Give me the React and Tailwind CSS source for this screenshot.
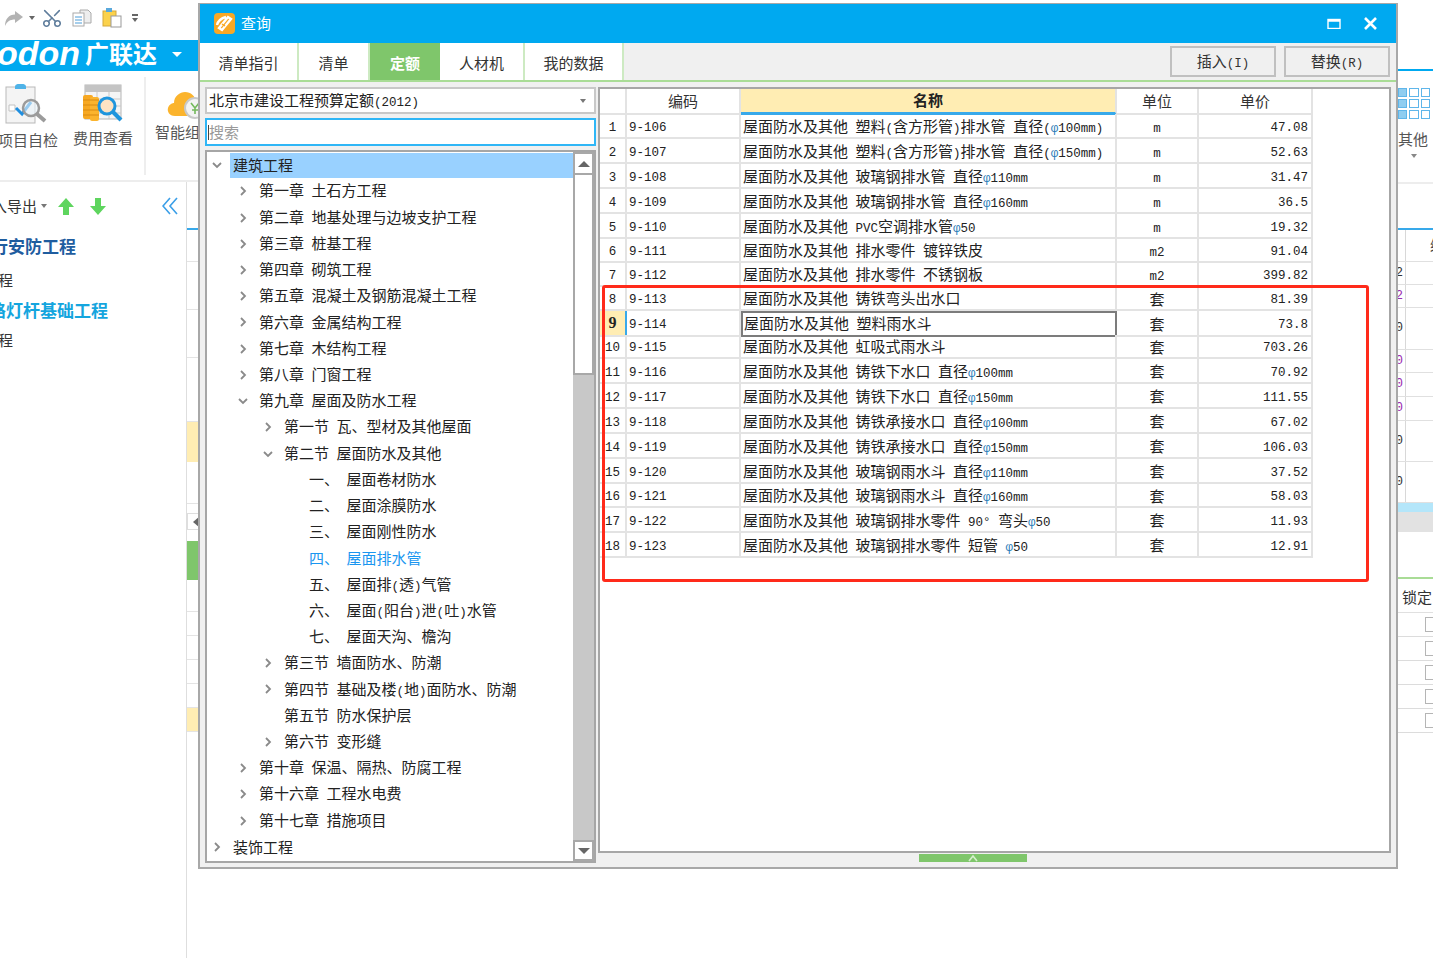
import { Scissors } from "lucide-react";

const treeRows = [
  { level: 0, icon: "down", text: "建筑工程", active: true },
  { level: 1, icon: "right", text: "第一章 土石方工程" },
  { level: 1, icon: "right", text: "第二章 地基处理与边坡支护工程" },
  { level: 1, icon: "right", text: "第三章 桩基工程" },
  { level: 1, icon: "right", text: "第四章 砌筑工程" },
  { level: 1, icon: "right", text: "第五章 混凝土及钢筋混凝土工程" },
  { level: 1, icon: "right", text: "第六章 金属结构工程" },
  { level: 1, icon: "right", text: "第七章 木结构工程" },
  { level: 1, icon: "right", text: "第八章 门窗工程" },
  { level: 1, icon: "down", text: "第九章 屋面及防水工程" },
  { level: 2, icon: "right", text: "第一节 瓦、型材及其他屋面" },
  { level: 2, icon: "down", text: "第二节 屋面防水及其他" },
  { level: 3, text: "一、 屋面卷材防水" },
  { level: 3, text: "二、 屋面涂膜防水" },
  { level: 3, text: "三、 屋面刚性防水" },
  { level: 3, text: "四、 屋面排水管", link: true },
  { level: 3, text: "五、 屋面排(透)气管" },
  { level: 3, text: "六、 屋面(阳台)泄(吐)水管" },
  { level: 3, text: "七、 屋面天沟、檐沟" },
  { level: 2, icon: "right", text: "第三节 墙面防水、防潮" },
  { level: 2, icon: "right", text: "第四节 基础及楼(地)面防水、防潮" },
  { level: 2, text: "第五节 防水保护层" },
  { level: 2, icon: "right", text: "第六节 变形缝" },
  { level: 1, icon: "right", text: "第十章 保温、隔热、防腐工程" },
  { level: 1, icon: "right", text: "第十六章 工程水电费" },
  { level: 1, icon: "right", text: "第十七章 措施项目" },
  { level: 0, icon: "right", text: "装饰工程" },
];

const PRE = "屋面防水及其他 ";
const quotaRows = [
  ["9-106", "塑料(含方形管)排水管 直径(φ100mm)", "m", "47.08"],
  ["9-107", "塑料(含方形管)排水管 直径(φ150mm)", "m", "52.63"],
  ["9-108", "玻璃钢排水管 直径φ110mm", "m", "31.47"],
  ["9-109", "玻璃钢排水管 直径φ160mm", "m", "36.5"],
  ["9-110", "PVC空调排水管φ50", "m", "19.32"],
  ["9-111", "排水零件 镀锌铁皮", "m2", "91.04"],
  ["9-112", "排水零件 不锈钢板", "m2", "399.82"],
  ["9-113", "铸铁弯头出水口", "套", "81.39"],
  ["9-114", "塑料雨水斗", "套", "73.8"],
  ["9-115", "虹吸式雨水斗", "套", "703.26"],
  ["9-116", "铸铁下水口 直径φ100mm", "套", "70.92"],
  ["9-117", "铸铁下水口 直径φ150mm", "套", "111.55"],
  ["9-118", "铸铁承接水口 直径φ100mm", "套", "67.02"],
  ["9-119", "铸铁承接水口 直径φ150mm", "套", "106.03"],
  ["9-120", "玻璃钢雨水斗 直径φ110mm", "套", "37.52"],
  ["9-121", "玻璃钢雨水斗 直径φ160mm", "套", "58.03"],
  ["9-122", "玻璃钢排水零件 90° 弯头φ50", "套", "11.93"],
  ["9-123", "玻璃钢排水零件 短管 φ50", "套", "12.91"],
];

const tabs = [
  { label: "清单指引", width: "w-[99px]" },
  { label: "清单", width: "w-[71px]" },
  { label: "定额", width: "w-[70px]", active: true },
  { label: "人材机", width: "w-[85px]" },
  { label: "我的数据", width: "w-[99px]" },
];

const levelPad = ["pl-[5px]", "pl-[31px]", "pl-[56px]", "pl-[102px]"];
const gridCols = "grid grid-cols-[27px_114px_376px_82px_114px] w-[713px]";

// half-width runs are drawn in mono so they take 7.5px per char next to 15px CJK
function Txt({ children }) {
  const parts = children.split(/(φ|[\x20-\x7e°]+)/).filter(Boolean);
  return (
    <span className="whitespace-pre">
      {parts.map((part, i) =>
        part === "φ" ? (
          <span key={i} className="[font-family:'Liberation_Mono',monospace] text-[12.5px] text-[#2c7db8]">
            {part}
          </span>
        ) : /^[\x20-\x7e°]+$/.test(part) ? (
          <span key={i} className="[font-family:'Liberation_Mono',monospace] text-[12.5px]">
            {part}
          </span>
        ) : (
          <span key={i}>{part}</span>
        )
      )}
    </span>
  );
}

function Chevron({ dir }) {
  return (
    <svg width="10" height="10" viewBox="0 0 10 10" fill="none" stroke="#8a8a8a" strokeWidth="1.8">
      {dir === "down" ? <path d="M1 3l4 4 4-4" /> : <path d="M3 1l4 4-4 4" />}
    </svg>
  );
}

function CheckIcon() {
  return (
    <svg width="46" height="42" viewBox="0 0 46 42" fill="none">
      <rect x="1" y="4" width="29" height="36" fill="#f4f4f4" stroke="#b9b9b9" />
      <path d="M10 4c0-3 3-3 3-3h5s3 0 3 3v2H10z" fill="#4fb3e8" />
      <path d="M4 22h6v6H4z" stroke="#c2c2c2" fill="#fff" />
      <path d="M11 25l6 6 9-12" stroke="#1f8fe0" strokeWidth="3" />
      <circle cx="26" cy="25" r="8" stroke="#9b9b9b" strokeWidth="2.5" fill="#e8f2f8" fillOpacity="0.6" />
      <path d="M32 31l8 7" stroke="#9b9b9b" strokeWidth="4" />
    </svg>
  );
}

function FeeIcon() {
  return (
    <svg width="40" height="38" viewBox="0 0 40 38" fill="none">
      <rect x="2" y="1" width="36" height="34" fill="#f5f5f5" stroke="#b5b5b5" />
      <rect x="2" y="1" width="36" height="7" fill="#c4c4c4" />
      <path d="M2 15h36M2 22h36M2 29h36M14 8v27M26 8v27" stroke="#c9c9c9" />
      <rect x="0" y="11" width="10" height="24" rx="2" fill="#f7a823" />
      <rect x="7" y="13" width="9" height="24" rx="2" fill="#fbb42d" />
      <path d="M0 16h16M0 21h16M0 26h16M0 31h16" stroke="#d98a12" />
      <circle cx="24" cy="22" r="8" fill="#fde3c4" stroke="#1f95dd" strokeWidth="3" />
      <path d="M30 28l8 8" stroke="#1f95dd" strokeWidth="4" />
    </svg>
  );
}

function CloudIcon() {
  return (
    <svg width="34" height="32" viewBox="0 0 34 32" fill="none">
      <path d="M8 29C2 29 0 24 1 21c1-4 5-5 6-5 0-7 6-11 11-11 6 0 10 4 11 9v15z" fill="#fbb42d" />
      <circle cx="28" cy="21" r="10" fill="#f3f3f3" stroke="#c9c9c9" strokeWidth="2" />
      <path d="M24 16l4 5 4-5M28 21v6M25 23h6" stroke="#74b95c" strokeWidth="1.6" />
    </svg>
  );
}

function QuickBar() {
  return (
    <div className="h-[40px] flex items-center pl-[5px] pb-[4px]">
      <svg width="18" height="15" viewBox="0 0 18 15" fill="#b3b3b3">
        <path d="M10 0l8 6-8 6V8.500C5 8.500 2 10.500 0 15 0 8 4 3.500 10 3.500z" />
      </svg>
      <span className="ml-[6px] w-0 h-0 border-x-[3.5px] border-x-transparent border-t-[4px] border-t-[#666]" />
      <Scissors size={22} strokeWidth={1.7} className="ml-[6px] text-[#5f7d9c] -rotate-90" />
      <svg className="ml-[9px]" width="20" height="18" viewBox="0 0 20 18" fill="none">
        <path d="M8 1h8l3 3v10H8z" fill="#eee" stroke="#aaa" />
        <rect x="1" y="4" width="11" height="13" fill="#fff" stroke="#aaa" />
        <path d="M3 8h7M3 11h7M3 14h7" stroke="#4d9dd8" />
      </svg>
      <svg className="ml-[10px]" width="20" height="20" viewBox="0 0 20 20" fill="none">
        <rect x="1" y="3" width="13" height="15" fill="#fbd24c" stroke="#d5a93a" />
        <rect x="4" y="0" width="6" height="4" fill="#5aa9dc" />
        <rect x="9" y="8" width="10" height="11" fill="#fff" stroke="#999" />
      </svg>
      <div className="ml-[10px] flex flex-col items-center gap-[2px]">
        <span className="w-[6px] h-[2px] bg-[#666]" />
        <span className="w-0 h-0 border-x-[3.5px] border-x-transparent border-t-[4px] border-t-[#666]" />
      </div>
    </div>
  );
}

function LeftColumn() {
  return (
    <div className="w-[198px] shrink-0 h-full flex flex-col overflow-hidden">
      <QuickBar />
      {/* logo bar */}
      <div className="h-[31px] bg-[#00a9f0] flex items-center pb-[6px] text-white overflow-hidden">
        <span className="-ml-[3px] [font-family:'Liberation_Sans',sans-serif] font-bold italic text-[34px] leading-none">
          odon
        </span>
        <span className="ml-[5px] font-bold text-[24px] leading-none">广联达</span>
        <span className="ml-[15px] mt-[4px] w-0 h-0 border-x-[5px] border-x-transparent border-t-[5px] border-t-white" />
      </div>
      {/* ribbon */}
      <div className="h-[111px] flex border-b-2 border-[#ededed] text-[#555] text-[15px]">
        <div className="w-[66px] -ml-[5px] flex flex-col items-center pt-[12px] shrink-0">
          <CheckIcon />
          <span className="mt-[4px] leading-[22px] whitespace-nowrap">项目自检</span>
        </div>
        <div className="w-[62px] ml-[11px] flex flex-col items-center pt-[13px] shrink-0">
          <FeeIcon />
          <span className="mt-[5px] leading-[22px] whitespace-nowrap">费用查看</span>
        </div>
        <div className="w-[2px] h-[98px] mt-[6px] ml-[10px] bg-[#eeeeee] shrink-0" />
        <div className="ml-[9px] flex flex-col pt-[16px] shrink-0">
          <div className="pl-[12px]"><CloudIcon /></div>
          <span className="mt-[2px] leading-[22px] whitespace-nowrap">智能组价</span>
        </div>
      </div>
      <div className="flex-1 flex min-h-0">
        {/* project tree */}
        <div className="w-[187px] shrink-0 border-r border-[#dedede] overflow-hidden">
          <div className="h-[48px] flex items-center relative">
            <span className="-ml-[8px] text-[15px] text-[#333] whitespace-nowrap">入导出</span>
            <span className="ml-[4px] w-0 h-0 border-x-[3px] border-x-transparent border-t-[4px] border-t-[#777]" />
            <svg className="ml-[11px]" width="16" height="17" viewBox="0 0 16 17" fill="#5ed55e">
              <path d="M8 0l8 9h-5v8H5V9H0z" />
            </svg>
            <svg className="ml-[16px]" width="16" height="17" viewBox="0 0 16 17" fill="#5ed55e">
              <path d="M8 17L0 8h5V0h6v8h5z" />
            </svg>
            <svg className="ml-[56px]" width="16" height="18" viewBox="0 0 16 18" fill="none" stroke="#3b9fe8" strokeWidth="1.6">
              <path d="M8 1L1 9l7 8M15 1L8 9l7 8" />
            </svg>
          </div>
          <div className="font-bold text-[17px]">
            <div className="h-[32px] -ml-[9px] flex items-center text-[#1f5d9f] whitespace-nowrap">行安防工程</div>
            <div className="h-[36px] -ml-[2px] flex items-center text-[#333] text-[15px] font-normal">程</div>
            <div className="h-[24px] -ml-[11px] flex items-center text-[#14a5de] whitespace-nowrap">路灯杆基础工程</div>
            <div className="h-[36px] -ml-[2px] flex items-center text-[#333] text-[15px] font-normal">程</div>
          </div>
        </div>
        {/* strip of the grid behind the dialog */}
        <div className="flex-1 flex flex-col">
          <div className="h-[46px]" />
          <div className="h-[2px] bg-[#38a9ea]" />
          <div className="h-[32px] border-b border-[#e4e4e4]" />
          <div className="h-[48px] border-b border-[#e4e4e4]" />
          <div className="h-[48px] border-b border-[#e4e4e4]" />
          <div className="h-[64px] border-b border-[#e4e4e4]" />
          <div className="h-[40px] bg-[#ffedb3]" />
          <div className="h-[42px] border-b border-[#e4e4e4]" />
          <div className="h-[9px]" />
          <div className="h-[17px] flex items-center border border-[#dedede]">
            <span className="w-0 h-0 border-y-[5px] border-y-transparent border-r-[6px] border-r-[#666] ml-[5px]" />
          </div>
          <div className="h-[11px]" />
          <div className="h-[39px] bg-[#7fc66b]" />
          <div className="h-[32px] border-b border-[#e4e4e4]" />
          <div className="h-[24px] border-b border-[#e4e4e4]" />
          <div className="h-[24px] border-b border-[#e4e4e4]" />
          <div className="h-[24px] border-b border-[#e4e4e4]" />
          <div className="h-[24px] border-b border-[#e4e4e4]" />
          <div className="h-[24px] bg-[#ffedb3] border-b border-[#e4e4e4]" />
        </div>
      </div>
    </div>
  );
}

const sliverRows = [
  { h: "h-[23px]", v: "2", c: "text-[#333]" },
  { h: "h-[23px]", v: "2", c: "text-[#9a2bb0]" },
  { h: "h-[42px]", v: "0", c: "text-[#333]" },
  { h: "h-[23px]", v: "0", c: "text-[#9a2bb0]" },
  { h: "h-[24px]", v: "0", c: "text-[#9a2bb0]" },
  { h: "h-[24px]", v: "0", c: "text-[#9a2bb0]" },
  { h: "h-[41px]", v: "0", c: "text-[#333]" },
  { h: "h-[41px]", v: "0", c: "text-[#333]" },
];

function RightColumn() {
  return (
    <div className="w-[35px] shrink-0 h-full flex flex-col overflow-hidden">
      <div className="h-[69px] shrink-0" />
      <div className="h-[2px] bg-[#00a9f0] shrink-0" />
      <div className="h-[113px] shrink-0 border-b-2 border-[#ededed] pt-[17px]">
        <div className="grid grid-cols-3 gap-[2px] w-[32px]">
          {[0, 1, 2, 3, 4, 5, 6, 7, 8].map((i) => (
            <span
              key={i}
              className={
                i % 3 === 0
                  ? "h-[9px] bg-[#8fcdf0] border border-[#5fb6ea]"
                  : "h-[9px] bg-white border border-[#5fb6ea]"
              }
            />
          ))}
        </div>
        <div className="mt-[10px] text-[15px] leading-[20px] text-[#555] whitespace-nowrap">其他</div>
        <span className="block mt-[5px] ml-[13px] w-0 h-0 border-x-[3.5px] border-x-transparent border-t-[4px] border-t-[#888]" />
      </div>
      <div className="h-[44px] shrink-0" />
      <div className="h-[2px] bg-[#38a9ea] shrink-0" />
      <div className="h-[32px] shrink-0 flex border-b border-[#e0e0e0]">
        <div className="w-[8px] shrink-0 border-r border-[#d8d8d8]" />
        <div className="pl-[24px] text-[15px] leading-[30px] text-[#444] whitespace-nowrap">编码</div>
      </div>
      {sliverRows.map((row, i) => (
        <div key={i} className={`${row.h} shrink-0 flex border-b border-[#e0e0e0]`}>
          <div
            className={`w-[8px] shrink-0 border-r border-[#d8d8d8] flex items-center justify-end pr-[2px] [font-family:'Liberation_Mono',monospace] text-[12.5px] ${row.c}`}
          >
            {row.v}
          </div>
        </div>
      ))}
      <div className="h-[9px] shrink-0 bg-[#b4e6fa]" />
      <div className="h-[20px] shrink-0 bg-[#e2e2e2]" />
      <div className="h-[47px] shrink-0 border-b-2 border-[#a9dc96]" />
      <div className="h-[34px] shrink-0 pl-[4px] text-[15px] leading-[36px] text-[#333] whitespace-nowrap border-b border-[#e0e0e0]">
        锁定
      </div>
      {[0, 1, 2, 3, 4].map((i) => (
        <div key={i} className="h-[24px] shrink-0 border-b border-[#dcdcdc] flex items-center pl-[27px]">
          <span className="w-[13px] h-[15px] shrink-0 bg-white border border-[#b5b5b5]" />
        </div>
      ))}
    </div>
  );
}

function DialogIcon() {
  return (
    <svg width="21" height="21" viewBox="0 0 21 21" fill="none">
      <rect width="21" height="21" rx="4" fill="#f9a825" />
      <path d="M3 12c1-4 5-7 9-8M5 15l3 2 9-11-3-2z" stroke="#fff" strokeWidth="2.4" />
      <path d="M8 11l3 2" stroke="#f9a825" strokeWidth="1.5" />
    </svg>
  );
}

function TreePane() {
  return (
    <div className="flex-1 min-h-0 flex border-2 border-[#a6a6a6] bg-white">
      <div className="flex-1 min-w-0 overflow-hidden text-[15px] text-[#222]">
        {treeRows.map((row) => (
          <div key={row.text} className={`h-[26.23px] flex items-center ${levelPad[row.level]}`}>
            {row.icon ? (
              <span className="w-[21px] shrink-0 flex">
                <Chevron dir={row.icon} />
              </span>
            ) : row.level < 3 ? (
              <span className="w-[21px] shrink-0" />
            ) : null}
            <span
              className={
                row.active
                  ? "flex-1 h-[25px] -ml-[3px] pl-[3px] bg-[#99d1ff] flex items-center"
                  : row.link
                    ? "text-[#1a96f0]"
                    : ""
              }
            >
              <Txt>{row.text}</Txt>
            </span>
          </div>
        ))}
      </div>
      <div className="w-[21px] shrink-0 flex flex-col bg-[#c8c8c8]">
        <div className="h-[23px] shrink-0 bg-white border-2 border-[#a8a8a8] flex items-center justify-center">
          <span className="w-0 h-0 border-x-[6px] border-x-transparent border-b-[6px] border-b-[#666]" />
        </div>
        <div className="h-[200px] shrink-0 bg-white border-x-2 border-b-2 border-[#a8a8a8]" />
        <div className="flex-1" />
        <div className="h-[21px] shrink-0 bg-white border-2 border-[#a8a8a8] flex items-center justify-center">
          <span className="w-0 h-0 border-x-[6px] border-x-transparent border-t-[6px] border-t-[#666]" />
        </div>
      </div>
    </div>
  );
}

function QuotaGrid() {
  const cell = "border-r-2 border-b-2 border-[#e3e3e3] flex items-center overflow-hidden";
  const mono = "pt-[5px] [font-family:'Liberation_Mono',monospace] text-[12.5px]";
  return (
    <div className="flex-1 min-h-0 border-2 border-[#a6a6a6] bg-white text-[15px] text-[#222]">
      <div className={`${gridCols} h-[25px]`}>
        <div className={cell} />
        <div className={`${cell} justify-center text-[#333]`}>编码</div>
        <div className="bg-[#ffedb3] border-b-[3px] border-[#38a9ea] flex items-center justify-center font-bold border-r-2 border-r-[#e3e3e3]">
          名称
        </div>
        <div className={`${cell} justify-center text-[#333]`}>单位</div>
        <div className={`${cell} justify-center text-[#333]`}>单价</div>
      </div>
      {quotaRows.map((row, i) => {
        const selected = i === 8;
        const short = (i >= 5 && i <= 9) || i === 15;
        return (
          <div key={row[0]} className={`${gridCols} ${short ? "h-[24px]" : "h-[25px]"}`}>
            <div
              className={
                selected
                  ? "bg-[#ffedb3] border-r-2 border-r-[#38a9ea] border-b-2 border-b-[#e3e3e3] flex items-center justify-center [font-family:'Liberation_Serif',serif] font-bold text-[16px]"
                  : `${cell} justify-center ${mono}`
              }
            >
              {i + 1}
            </div>
            <div className={`${cell} pl-[2px] ${mono}`}>{row[0]}</div>
            <div
              className={
                selected
                  ? "border-2 border-[#7c7c7c] flex items-center pl-[1px] overflow-hidden"
                  : `${cell} pl-[2px] pt-[2px]`
              }
            >
              <Txt>{PRE + row[1]}</Txt>
            </div>
            <div className={`${cell} justify-center pt-[2px]`}>
              <Txt>{row[2]}</Txt>
            </div>
            <div className={`${cell} justify-end pr-[3px] ${mono}`}>{row[3]}</div>
          </div>
        );
      })}
    </div>
  );
}

function QueryDialog() {
  return (
    <div className="absolute left-[198px] top-[3px] w-[1200px] h-[866px] flex flex-col bg-[#f0f0f0] border-2 border-t-1 border-[#a8a8a8]">
      {/* title bar */}
      <div className="h-[39px] shrink-0 bg-[#00a9f0] flex items-center pl-[14px] pr-[19px] text-white">
        <DialogIcon />
        <span className="ml-[6px] text-[15px]">查询</span>
        <svg className="ml-auto" width="14" height="11" viewBox="0 0 14 11" fill="none" stroke="#fff">
          <rect x="1" y="1.500" width="12" height="9" strokeWidth="1.400" />
          <path d="M1 2.500h12" strokeWidth="2.500" />
        </svg>
        <svg className="ml-[23px]" width="13" height="13" viewBox="0 0 13 13" fill="none" stroke="#fff" strokeWidth="2.600">
          <path d="M1 1l11 11M12 1L1 12" />
        </svg>
      </div>
      {/* tabs */}
      <div className="h-[39px] shrink-0 flex border-b-2 border-[#a9dc96]">
        {tabs.map((tab) => (
          <div
            key={tab.label}
            className={
              tab.active
                ? `${tab.width} pt-[4px] bg-[#7fc66b] text-white font-bold text-[15px] flex items-center justify-center`
                : `${tab.width} pt-[4px] bg-white text-[#333] text-[15px] flex items-center justify-center border-r-2 border-[#cdeac2]`
            }
          >
            {tab.label}
          </div>
        ))}
        <div className="ml-auto flex items-start gap-[8px] pt-[3px] pr-[6px]">
          <div className="w-[106px] h-[31px] border-2 border-[#c0c0c0] bg-[#f0f0f0] flex items-center justify-center text-[15px] text-[#333]">
            <Txt>插入(I)</Txt>
          </div>
          <div className="w-[106px] h-[31px] border-2 border-[#c0c0c0] bg-[#f0f0f0] flex items-center justify-center text-[15px] text-[#333]">
            <Txt>替换(R)</Txt>
          </div>
        </div>
      </div>
      {/* body */}
      <div className="flex-1 min-h-0 flex pt-[5px] pl-[5px] pr-[5px]">
        <div className="w-[391px] shrink-0 flex flex-col pb-[4px]">
          <div className="h-[27px] shrink-0 bg-white border-2 border-[#c8c8c8] flex items-center pl-[2px] pr-[8px] text-[15px] text-[#222]">
            <Txt>北京市建设工程预算定额(2012)</Txt>
            <span className="ml-auto w-0 h-0 border-x-[3.5px] border-x-transparent border-t-[4px] border-t-[#777]" />
          </div>
          <div className="h-[28px] mt-[4px] shrink-0 bg-white border-2 border-[#2fb6f6] flex items-center pl-[1px] text-[15px] text-[#999]">
            <span className="w-[1px] h-[15px] bg-[#444]" />
            搜索
          </div>
          <div className="h-[4px] shrink-0" />
          <TreePane />
        </div>
        <div className="flex-1 min-w-0 flex flex-col pl-[2px]">
          <QuotaGrid />
          {/* splitter handle */}
          <div className="h-[14px] shrink-0 flex justify-center pr-[43px]">
            <div className="w-[108px] h-[8px] mt-[1px] bg-[#7fc66b] flex justify-center">
              <svg width="10" height="8" viewBox="0 0 10 8" fill="none" stroke="#d6efcd" strokeWidth="1.6">
                <path d="M1 7l4-5 4 5" />
              </svg>
            </div>
          </div>
        </div>
      </div>
    </div>
  );
}

export default function App() {
  return (
    <div className="relative w-[1433px] h-[958px] overflow-hidden bg-white flex [font-family:'Noto_Sans_CJK_SC',sans-serif]">
      <LeftColumn />
      <div className="w-[1200px] shrink-0" />
      <RightColumn />
      <QueryDialog />
      {/* red annotation drawn over the grid */}
      <div className="absolute left-[602px] top-[285px] w-[767px] h-[297px] border-[3px] border-[#ff2a1a] rounded-[3px]" />
    </div>
  );
}
